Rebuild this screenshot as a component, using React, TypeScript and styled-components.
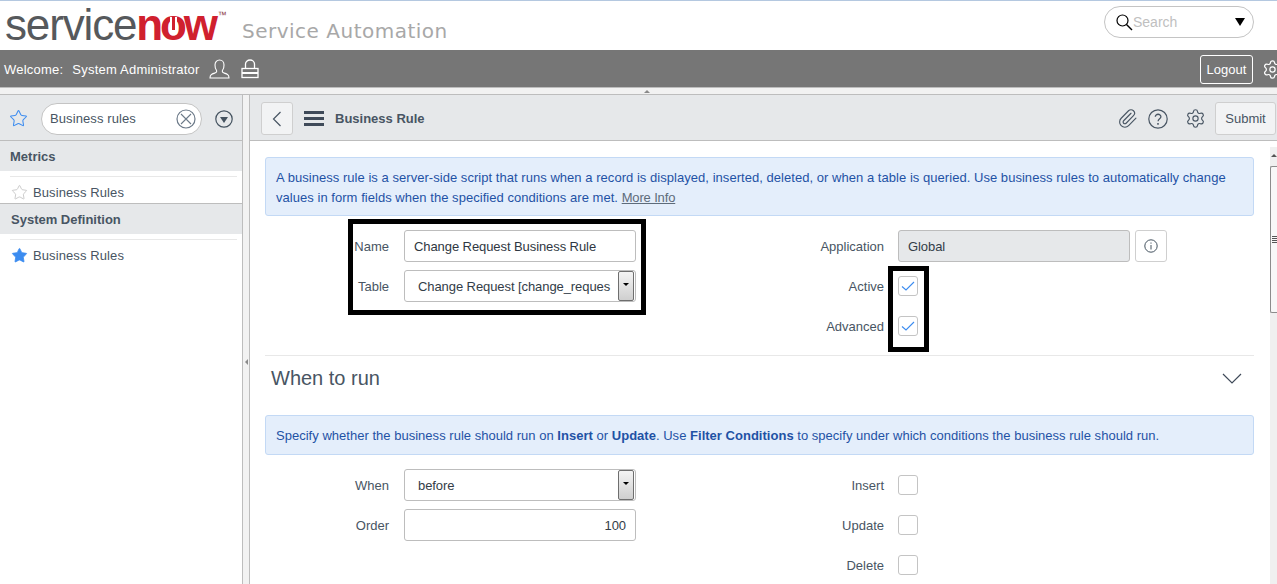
import * as React from 'react';
import styled, { createGlobalStyle } from 'styled-components';
import { Settings, Paperclip, Star } from 'lucide-react';

const TEXT_COLOR = '#485563';
const PANEL_COLOR = '#e6e8ea';
const LINE_COLOR = '#bdbdbd';
const BLUE_COLOR = '#3c8cf0';

const GlobalStyle = createGlobalStyle`
	html, body {
		margin: 0;
		height: 100%;
		overflow: hidden;
		background: #fff;
		font-family: "Liberation Sans", Arial, sans-serif;
		font-size: 13px;
		color: ${TEXT_COLOR};
	}
	#root {
		height: 100%;
	}
`;

const Page = styled.div`
	height: 584px;
	width: 1277px;
	display: flex;
	flex-direction: column;
	overflow: hidden;
	position: relative;
`;

const Banner = styled.header`
	height: 49px;
	border-top: 1px solid #b4c8e0;
	flex: none;
	display: flex;
	align-items: center;
	justify-content: space-between;
	padding: 0 23px 0 5px;
`;

const BrandRow = styled.div`
	display: flex;
	align-items: flex-start;
	margin-top: -1px;
`;

const Logo = styled.div`
	font-size: 44px;
	line-height: 44px;
	letter-spacing: -1.15px;
	color: #56595c;
	white-space: nowrap;
	width: 237px;
	flex: none;
`;

const LogoNow = styled.span`
	color: #d0202e;
	font-weight: bold;
	letter-spacing: -3.2px;
`;

const LogoO = styled.span`
	position: relative;
	display: inline-block;

	&::after {
		content: '';
		position: absolute;
		left: 10px;
		top: 14px;
		width: 3px;
		height: 13px;
		background: #d0202e;
		border-left: 2px solid #fff;
		border-right: 2px solid #fff;
	}
`;

const LogoMark = styled.sup`
	font-size: 9px;
	line-height: 0;
	letter-spacing: 0;
	color: #8a3b40;
	vertical-align: 22px;
	margin-left: 3px;
`;

const ProductName = styled.span`
	font-family: "DejaVu Sans", sans-serif;
	font-size: 20px;
	color: #a8a8a8;
	letter-spacing: 0.5px;
	margin-top: 16px;
`;

const GlobalSearch = styled.div`
	width: 150px;
	height: 32px;
	box-sizing: border-box;
	border: 1px solid #c4c4c4;
	border-radius: 16px;
	display: flex;
	align-items: center;
	padding: 0 7px 0 10px;
	margin-top: -7px;
	color: #c0c0c0;
	font-size: 14px;
	justify-content: space-between;
`;

const SearchLabel = styled.span`
	display: flex;
	align-items: center;
`;

const BlackCaret = styled.span`
	width: 0;
	height: 0;
	border-left: 5px solid transparent;
	border-right: 5px solid transparent;
	border-top: 8px solid #000;
	margin-right: 1px;
	margin-top: -1px;
`;

const UserBar = styled.div`
	height: 37px;
	box-sizing: border-box;
	padding: 1px 0 0 4px;
	flex: none;
	background: #767676;
	color: #fff;
	display: flex;
	align-items: center;
	font-size: 13px;
	letter-spacing: 0.22px;
	overflow: hidden;
`;

const Welcome = styled.span`
	margin-right: 9px;
`;

const UserIcon = styled.svg`
	margin-left: 9px;
	flex: none;
`;

const LockIcon = styled.svg`
	margin-left: 11px;
	flex: none;
`;

const Logout = styled.button`
	margin-left: auto;
	width: 53px;
	height: 29px;
	background: transparent;
	color: #fff;
	border: 1px solid #fff;
	border-radius: 3px;
	font: inherit;
	letter-spacing: 0;
	padding: 0;
`;

const BarGear = styled(Settings)`
	margin: 0 -6px 0 9px;
	flex: none;
`;

const CollapseStrip = styled.div`
	height: 6px;
	flex: none;
	background: #f2f2f2;
	border-top: 1px solid ${LINE_COLOR};
	display: flex;
	justify-content: center;
	align-items: center;
	padding-left: 17px;
`;

const UpArrow = styled.span`
	width: 0;
	height: 0;
	border-left: 3px solid transparent;
	border-right: 3px solid transparent;
	border-bottom: 3px solid #8a8a8a;
`;

const Body = styled.div`
	flex: 1;
	min-height: 0;
	display: flex;
	border-top: 1px solid ${LINE_COLOR};
`;

const Nav = styled.nav`
	width: 242px;
	flex: none;
	border-right: 1px solid ${LINE_COLOR};
`;

const NavFilter = styled.div`
	height: 43px;
	padding: 2px 0 0 9px;
	background: ${PANEL_COLOR};
	border-bottom: 1px solid ${LINE_COLOR};
	display: flex;
	align-items: center;
`;

const FilterPill = styled.div`
	width: 161px;
	height: 32px;
	box-sizing: border-box;
	margin-left: 13px;
	background: #fff;
	border: 1px solid #c4c4c4;
	border-radius: 16px;
	display: flex;
	align-items: center;
	justify-content: space-between;
	padding: 0 5px 0 8px;
	font-size: 13px;
	letter-spacing: 0.1px;
`;

const CircleButton = styled.svg`
	flex: none;
`;

const NavMenuButton = styled(CircleButton)`
	margin-left: 13px;
`;

const GroupTitle = styled.div<{ $indent: number }>`
	height: 30px;
	background: ${PANEL_COLOR};
	font-weight: bold;
	display: flex;
	align-items: center;
	padding-left: ${(p) => p.$indent}px;
`;

const GroupBody = styled.div<{ $height: number; $closed?: boolean }>`
	height: ${(p) => p.$height}px;
	overflow: hidden;
	padding: 5px 5px 0 10px;
	box-sizing: border-box;
	${(p) => (p.$closed ? `border-bottom: 1px solid ${LINE_COLOR};` : '')}
`;

const GroupItem = styled.div`
	border-top: 1px solid #e8e8e8;
	display: flex;
	align-items: center;
	gap: 5px;
	padding: 7px 0 0 1px;
	height: 16px;
	letter-spacing: 0.1px;
`;

const Splitter = styled.div`
	width: 6px;
	flex: none;
	background: #f2f2f2;
	display: flex;
	align-items: center;
	justify-content: center;
	padding-top: 44px;
	box-sizing: border-box;
`;

const LeftArrow = styled.span`
	width: 0;
	height: 0;
	border-top: 3px solid transparent;
	border-bottom: 3px solid transparent;
	border-right: 3px solid #8a8a8a;
`;

const Main = styled.main`
	flex: 1;
	min-width: 0;
	border-left: 1px solid ${LINE_COLOR};
	position: relative;
`;

const FormHeader = styled.div`
	height: 43px;
	padding: 2px 1px 0 11px;
	background: ${PANEL_COLOR};
	border-bottom: 1px solid ${LINE_COLOR};
	display: flex;
	align-items: center;
`;

const HeaderButton = styled.button<{ $width: number }>`
	width: ${(p) => p.$width}px;
	height: 33px;
	background: #f2f3f4;
	border: 1px solid #cfcfcf;
	border-radius: 3px;
	color: ${TEXT_COLOR};
	font: inherit;
	padding: 0;
	display: flex;
	align-items: center;
	justify-content: center;
	flex: none;
`;

const Hamburger = styled.span`
	width: 20px;
	height: 15px;
	margin: 0 11px;
	flex: none;
	border-top: 3px solid #3f4a59;
	border-bottom: 3px solid #3f4a59;
	box-sizing: border-box;
	position: relative;

	&::after {
		content: '';
		position: absolute;
		left: 0;
		right: 0;
		top: 3px;
		height: 3px;
		background: #3f4a59;
	}
`;

const FormTitle = styled.span`
	font-weight: bold;
	flex: 1;
`;

const HeaderIcons = styled.div`
	display: flex;
	align-items: center;
`;

const HelpIcon = styled.svg`
	margin-left: 10px;
`;

const FormGear = styled(Settings)`
	margin: 0 9px 0 17px;
`;

const FormBody = styled.div`
	padding: 16px 0 0 15px;
	width: 989px;
`;

const InfoBox = styled.div<{ $height: number; $spacing: number }>`
	height: ${(p) => p.$height}px;
	box-sizing: border-box;
	background: #e4eefb;
	border: 1px solid #c3d9f5;
	border-radius: 3px;
	color: #1f52a5;
	padding: 2px 10px 0;
	line-height: 20px;
	display: flex;
	align-items: center;
	letter-spacing: ${(p) => p.$spacing}px;

	b {
		font-weight: bold;
	}
`;

const MoreInfo = styled.a`
	color: #5d6b7a;
	text-decoration: underline;
	letter-spacing: -0.15px;
`;

const FieldGrid = styled.div`
	display: grid;
	grid-template-columns: 139px 232px 262px 232px auto;
	grid-auto-rows: 32px;
	row-gap: 8px;
	margin-top: 14px;
	align-items: center;
`;

const FieldLabel = styled.label<{ $right: number }>`
	text-align: right;
	padding-right: ${(p) => p.$right}px;
	padding-top: 1px;
`;

const FieldBox = styled.div<{ $align?: string; $readonly?: boolean; $pad?: number }>`
	height: 32px;
	box-sizing: border-box;
	border: 1px solid #bdbdbd;
	border-radius: 3px;
	background: ${(p) => (p.$readonly ? PANEL_COLOR : '#fff')};
	display: flex;
	align-items: center;
	justify-content: ${(p) => p.$align || 'flex-start'};
	padding: 0 9px 0 ${(p) => p.$pad ?? 9}px;
	color: #333d48;
	position: relative;
	white-space: nowrap;
	overflow: hidden;
	letter-spacing: -0.08px;
`;

const NameValue = styled.span`
	color: #2f3742;
`;

const SelectButton = styled.span`
	position: absolute;
	right: 1px;
	top: 0;
	bottom: 0;
	width: 16px;
	box-sizing: border-box;
	border: 1px solid #6e6e6e;
	border-radius: 2px;
	background: linear-gradient(#f4f4f4, #cfcfcf);
	display: flex;
	align-items: center;
	justify-content: center;
	padding-bottom: 4px;

	&::after {
		content: '';
		border-left: 3px solid transparent;
		border-right: 3px solid transparent;
		border-top: 3px solid #000;
	}
`;

const InfoButton = styled.button`
	width: 32px;
	height: 32px;
	margin-left: 5px;
	background: #fff;
	border: 1px solid #cfcfcf;
	border-radius: 3px;
	padding: 0;
	display: flex;
	align-items: center;
	justify-content: center;
`;

const CheckBox = styled.span`
	width: 20px;
	height: 20px;
	box-sizing: border-box;
	border: 1px solid #c4c4c4;
	border-radius: 3px;
	display: flex;
	align-items: center;
	justify-content: center;
`;

const Divider = styled.hr`
	border: 0;
	border-top: 1px solid #e8e8e8;
	margin: 13px 0 0;
`;

const SectionHead = styled.div`
	height: 45px;
	margin-bottom: 14px;
	display: flex;
	align-items: center;
	justify-content: space-between;
	padding: 0 12px 0 6px;
	font-size: 20px;
	color: ${TEXT_COLOR};
`;

const Scrollbar = styled.div`
	position: absolute;
	right: 0;
	top: 52px;
	bottom: 0;
	width: 7px;
	background: #f0f0f0;
	display: flex;
	flex-direction: column;
	align-items: center;
	padding-top: 7px;
	box-sizing: border-box;
`;

const ScrollArrow = styled.span`
	flex: none;
	width: 0;
	height: 0;
	border-left: 3px solid transparent;
	border-right: 3px solid transparent;
	border-bottom: 3px solid #555;
`;

const ScrollThumb = styled.div`
	margin-top: 9px;
	align-self: stretch;
	flex: none;
	height: 147px;
	box-sizing: border-box;
	border: 1px solid #8c8c8c;
	border-right: 0;
	border-radius: 2px 0 0 2px;
	background: #f8f8f8;
	display: flex;
	align-items: center;
	padding-left: 1px;

	&::after {
		content: '';
		width: 5px;
		height: 7px;
		background: repeating-linear-gradient(#555 0 1px, transparent 1px 2px);
	}
`;

const Annotation = styled.div`
	position: absolute;
	border: 5px solid #000;
	box-sizing: border-box;
	pointer-events: none;
`;

const NameAnnotation = styled(Annotation)`
	left: 348px;
	top: 219px;
	width: 298px;
	height: 96px;
`;

const CheckAnnotation = styled(Annotation)`
	left: 888px;
	top: 266px;
	width: 41px;
	height: 86px;
`;

const SearchGlass = () => (
	<svg width="18" height="18" viewBox="0 0 18 18" fill="none" stroke="#000">
		<circle cx="7.5" cy="7.5" r="5.5" strokeWidth="1.2" />
		<path d="M11.5 11.5 17 17" strokeWidth="1.4" />
	</svg>
);

const ClearIcon = () => (
	<CircleButton width="20" height="20" viewBox="0 0 20 20" fill="none" stroke="#6c7a89">
		<circle cx="10" cy="10" r="9" strokeWidth="1.2" />
		<path d="M5 5l10 10M15 5 5 15" strokeWidth="1.1" />
	</CircleButton>
);

const BlueCheck = () => (
	<svg width="14" height="14" viewBox="0 0 14 14" fill="none" stroke={BLUE_COLOR} strokeWidth="1.1">
		<path d="M1 7.500 5 11 13 3" />
	</svg>
);

const App: React.FC = () => (
	<Page>
		<GlobalStyle />
		<Banner>
			<BrandRow>
				<Logo>
					service
					<LogoNow>
						n<LogoO>o</LogoO>w
					</LogoNow>
					<LogoMark>™</LogoMark>
				</Logo>
				<ProductName>Service Automation</ProductName>
			</BrandRow>
			<GlobalSearch>
				<SearchLabel>
					<SearchGlass />
					Search
				</SearchLabel>
				<BlackCaret />
			</GlobalSearch>
		</Banner>
		<UserBar>
			<Welcome>Welcome:</Welcome>
			<span>System Administrator</span>
			<UserIcon width="21" height="20" viewBox="0 0 21 20" fill="none" stroke="#fff" strokeWidth="1.1">
				<path d="M1 19c0-3.500 2-4 5-5 2-.8 2-2 1.200-3.200C6 9 6 7.500 6 6c0-3 2-5 4.500-5S15 3 15 6c0 1.500 0 3-1.200 4.800C13 12 13 13.200 15 14c3 1 5 1.500 5 5z" />
			</UserIcon>
			<LockIcon width="18" height="20" viewBox="0 0 18 20" fill="none" stroke="#fff" strokeWidth="1.300">
				<path d="M4.500 9V5a4.500 4 0 0 1 9 0v4" />
				<rect x="1" y="9.500" width="16" height="9" />
				<path d="M1 14h16" strokeWidth="2" />
			</LockIcon>
			<Logout>Logout</Logout>
			<BarGear size={21} strokeWidth={1.4} color="#fff" />
		</UserBar>
		<CollapseStrip>
			<UpArrow />
		</CollapseStrip>
		<Body>
			<Nav>
				<NavFilter>
					<Star size={19} strokeWidth={1.3} color={BLUE_COLOR} />
					<FilterPill>
						Business rules
						<ClearIcon />
					</FilterPill>
					<NavMenuButton width="18" height="18" viewBox="0 0 18 18" fill="none">
						<circle cx="9" cy="9" r="8.200" stroke="#44525f" strokeWidth="1.200" />
						<path d="M5 7h8l-4 6z" fill="#44525f" />
					</NavMenuButton>
				</NavFilter>
				<GroupTitle $indent={10}>Metrics</GroupTitle>
				<GroupBody $height={33} $closed>
					<GroupItem>
						<Star size={17} strokeWidth={1.100} color="#bdbdbd" />
						Business Rules
					</GroupItem>
				</GroupBody>
				<GroupTitle $indent={11}>System Definition</GroupTitle>
				<GroupBody $height={60}>
					<GroupItem>
						<Star size={17} strokeWidth={1.100} color={BLUE_COLOR} fill={BLUE_COLOR} />
						Business Rules
					</GroupItem>
				</GroupBody>
			</Nav>
			<Splitter>
				<LeftArrow />
			</Splitter>
			<Main>
				<FormHeader>
					<HeaderButton $width={32}>
						<svg width="10" height="16" viewBox="0 0 10 16" fill="none" stroke={TEXT_COLOR} strokeWidth="1.200">
							<path d="M8.500 1 1.500 8l7 7" />
						</svg>
					</HeaderButton>
					<Hamburger />
					<FormTitle>Business Rule</FormTitle>
					<HeaderIcons>
						<Paperclip size={21} strokeWidth={1.300} />
						<HelpIcon width="20" height="20" viewBox="0 0 20 20" fill="none" stroke={TEXT_COLOR}>
							<circle cx="10" cy="10" r="9.200" strokeWidth="1.200" />
							<path d="M7.300 7.800c0-3.400 5.600-3.400 5.600 0 0 2-2.800 2-2.800 4.400" strokeWidth="1.300" />
							<path d="M10 14v1.800" strokeWidth="1.500" />
						</HelpIcon>
						<FormGear size={21} strokeWidth={1.300} />
						<HeaderButton $width={61}>Submit</HeaderButton>
					</HeaderIcons>
				</FormHeader>
				<FormBody>
					<InfoBox $height={59} $spacing={0.04}>
						<div>
							A business rule is a server-side script that runs when a record is displayed, inserted, deleted, or when a
							table is queried. Use business rules to automatically change values in form fields when the specified
							conditions are met. <MoreInfo>More Info</MoreInfo>
						</div>
					</InfoBox>
					<FieldGrid>
						<FieldLabel $right={15}>Name</FieldLabel>
						<FieldBox>
							<NameValue>Change Request Business Rule</NameValue>
						</FieldBox>
						<FieldLabel $right={14}>Application</FieldLabel>
						<FieldBox $readonly>Global</FieldBox>
						<InfoButton>
							<svg width="14" height="14" viewBox="0 0 14 14" fill="none" stroke="#44525f">
								<circle cx="7" cy="7" r="6.200" />
								<path d="M7 6v4.500M7 3.500v1.200" />
							</svg>
						</InfoButton>

						<FieldLabel $right={15}>Table</FieldLabel>
						<FieldBox $pad={13}>
							Change Request [change_reques
							<SelectButton />
						</FieldBox>
						<FieldLabel $right={14}>Active</FieldLabel>
						<CheckBox>
							<BlueCheck />
						</CheckBox>
						<span />

						<span />
						<span />
						<FieldLabel $right={14}>Advanced</FieldLabel>
						<CheckBox>
							<BlueCheck />
						</CheckBox>
					</FieldGrid>
					<Divider />
					<SectionHead>
						When to run
						<svg width="20" height="11" viewBox="0 0 20 11" fill="none" stroke="#3f4a59" strokeWidth="1.200">
							<path d="M1 1l9 9 9-9" />
						</svg>
					</SectionHead>
					<InfoBox $height={40} $spacing={0.02}>
						<div>
							Specify whether the business rule should run on <b>Insert</b> or <b>Update</b>. Use{' '}
							<b>Filter Conditions</b> to specify under which conditions the business rule should run.
						</div>
					</InfoBox>
					<FieldGrid>
						<FieldLabel $right={15}>When</FieldLabel>
						<FieldBox $pad={13}>
							before
							<SelectButton />
						</FieldBox>
						<FieldLabel $right={14}>Insert</FieldLabel>
						<CheckBox />
						<span />

						<FieldLabel $right={15}>Order</FieldLabel>
						<FieldBox $align="flex-end">100</FieldBox>
						<FieldLabel $right={14}>Update</FieldLabel>
						<CheckBox />
						<span />

						<span />
						<span />
						<FieldLabel $right={14}>Delete</FieldLabel>
						<CheckBox />
					</FieldGrid>
				</FormBody>
				<Scrollbar>
					<ScrollArrow />
					<ScrollThumb />
				</Scrollbar>
			</Main>
		</Body>
		<NameAnnotation />
		<CheckAnnotation />
	</Page>
);

export default App;
